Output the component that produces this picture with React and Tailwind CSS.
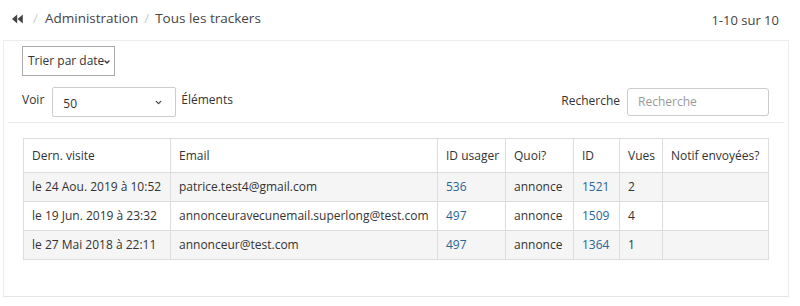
import { ChevronDown } from 'lucide-react';

const rows = [
  { date: 'le 24 Aou. 2019 à 10:52', email: 'patrice.test4@gmail.com', user: '536', what: 'annonce', id: '1521', views: '2' },
  { date: 'le 19 Jun. 2019 à 23:32', email: 'annonceuravecunemail.superlong@test.com', user: '497', what: 'annonce', id: '1509', views: '4' },
  { date: 'le 27 Mai 2018 à 22:11', email: 'annonceur@test.com', user: '497', what: 'annonce', id: '1364', views: '1' },
];

const BackIcon = () => (
  <svg width="11" height="10" viewBox="0 0 11 10" className="text-[#444]">
    <path d="M0 5 L5.2 0.5 L5.2 9.5 Z M5.6 5 L10.8 0.5 L10.8 9.5 Z" fill="currentColor" />
  </svg>
);

const App = () => {
  return (
    <div className="w-[800px] h-[306px] bg-white text-[#333] font-['Open_Sans',sans-serif] text-[12px]">
      {/* Breadcrumb */}
      <div className="h-[40px] flex items-center justify-between pl-[12px] pr-[21px]">
        <div className="flex items-center text-[13.5px] text-[#444] -mt-[3px]">
          <BackIcon />
          <span className="ml-[10px] mr-[7px] text-[#ccc]">/</span>
          <span>Administration</span>
          <span className="mx-[6px] text-[#ccc]">/</span>
          <span>Tous les trackers</span>
        </div>
        <div className="text-[13px] text-[#444] pt-[1px]">1-10 sur 10</div>
      </div>

      {/* Panel */}
      <div className="mx-[3px] w-[786px] h-[257px] border border-[#ececec] border-b-[#e4e4e4]">
        <div className="mx-[4px] pl-[14px] pr-[15px] pt-[5px] pb-[5px] border-b border-[#e6e6e6]">
          <div className="w-[93px] h-[30px] border border-[#aaa] flex items-center pl-[5px] relative">
            Trier par date
            <ChevronDown size={8} strokeWidth={4} className="absolute left-[80px] top-[11px] text-[#333]" />
          </div>
          <div className="flex items-center justify-between mt-[11px]">
            <div className="flex items-center">
              <span className="-mt-[4px]">Voir</span>
              <div className="ml-[8px] w-[124px] h-[30px] border border-[#ccc] rounded-[2px] flex items-center justify-between pl-[10px] pr-[12px]">
                <span className="pt-[4px]">50</span>
                <ChevronDown size={9} strokeWidth={3.5} className="text-[#444]" />
              </div>
              <span className="ml-[5px] -mt-[4px]">Éléments</span>
            </div>
            <div className="flex items-center">
              <span className="mr-[7px] -mt-[3px]">Recherche</span>
              <div className="w-[142px] h-[28px] border border-[#ccc] rounded-[3px] flex items-center pl-[10px] text-[#999]">
                Recherche
              </div>
            </div>
          </div>
        </div>

        <div className="px-[19px] pt-[15px]">
          <table className="w-[746px] table-fixed border-collapse whitespace-nowrap">
            <thead>
              <tr className="h-[34px]">
                <th className="w-[147px] border border-[#ddd] px-[8px] text-left font-normal">Dern. visite</th>
                <th className="w-[267px] border border-[#ddd] px-[8px] text-left font-normal">Email</th>
                <th className="w-[68px] border border-[#ddd] px-[8px] text-left font-normal">ID usager</th>
                <th className="w-[68px] border border-[#ddd] px-[8px] text-left font-normal">Quoi?</th>
                <th className="w-[46px] border border-[#ddd] px-[8px] text-left font-normal">ID</th>
                <th className="w-[43px] border border-[#ddd] px-[8px] text-left font-normal">Vues</th>
                <th className="border border-[#ddd] px-[8px] text-left font-normal">Notif envoyées?</th>
              </tr>
            </thead>
            <tbody>
              {rows.map((row, i) => (
                <tr key={row.id} className={`h-[29px] ${i % 2 === 0 ? 'bg-[#f5f5f5]' : 'bg-white'}`}>
                  <td className="border border-[#ddd] px-[8px]">{row.date}</td>
                  <td className="border border-[#ddd] px-[8px]">{row.email}</td>
                  <td className="border border-[#ddd] px-[8px] text-[#2a6496]">{row.user}</td>
                  <td className="border border-[#ddd] px-[8px]">{row.what}</td>
                  <td className="border border-[#ddd] px-[8px] text-[#2a6496]">{row.id}</td>
                  <td className="border border-[#ddd] px-[8px] text-[#333]">{row.views}</td>
                  <td className="border border-[#ddd] px-[8px]"></td>
                </tr>
              ))}
            </tbody>
          </table>
        </div>
      </div>
    </div>
  );
};

export default App;
